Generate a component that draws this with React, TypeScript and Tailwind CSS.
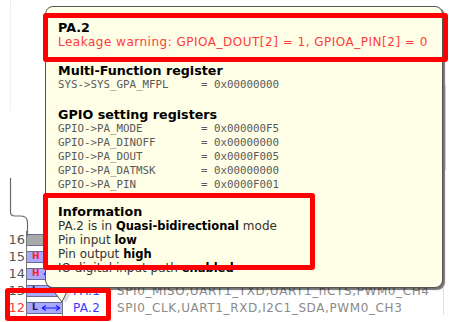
import React from "react";

const monoRows = [
  ["GPIO->PA_MODE", "0x000000F5"],
  ["GPIO->PA_DINOFF", "0x00000000"],
  ["GPIO->PA_DOUT", "0x0000F005"],
  ["GPIO->PA_DATMSK", "0x00000000"],
  ["GPIO->PA_PIN", "0x0000F001"],
];

// rows 14-16 sit under the tooltip, only their left part shows
const pins = [
  { n: "16", fill: "bg-[#a9a9a9]", mark: "", markCls: "", arrow: false, label: "", fn: "" },
  { n: "15", fill: "bg-[#a8a8ff]", mark: "H", markCls: "text-[#ff2020]", arrow: false, label: "", fn: "" },
  { n: "14", fill: "bg-[#a8a8ff]", mark: "H", markCls: "text-[#ff2020]", arrow: true, label: "", fn: "" },
  { n: "13", fill: "bg-[#a8a8ff]", mark: "L", markCls: "text-[#202050]", arrow: false, label: "PA.1", fn: "SPI0_MISO,UART1_TXD,UART1_nCTS,PWM0_CH4" },
  { n: "12", fill: "bg-[#a8a8ff]", mark: "L", markCls: "text-[#202050]", arrow: true, label: "PA.2", fn: "SPI0_CLK,UART1_RXD,I2C1_SDA,PWM0_CH3" },
];

// double-headed arrow used in the pin boxes
const Arrow = () => (
  <svg width="20" height="8" viewBox="0 0 20 8" className="ml-[3px]">
    <path d="M1 4 H19 M1 4 L5 1.5 M1 4 L5 6.5 M19 4 L15 1.5 M19 4 L15 6.5" stroke="#1a1aff" strokeWidth="1.1" fill="none" />
  </svg>
);

const Mono = ({ name, value }: { name: string; value: string }) => (
  <div className="whitespace-pre font-['DejaVu_Sans_Mono',monospace] text-[10.8px] leading-[14px] text-[#5a5a5a]">
    {name.padEnd(22, " ")}= {value}
  </div>
);

const B = ({ children }: { children: React.ReactNode }) => (
  <b className="text-[11.5px] text-black">{children}</b>
);

export default function App() {
  return (
    <div className="relative h-[322px] w-[450px] overflow-hidden bg-white font-['DejaVu_Sans',sans-serif]">
      {/* faint guide lines of the chip view */}
      <div className="absolute left-[10px] top-0 h-[110px] border-l border-dotted border-[#e2e2e2]" />
      <div className="absolute left-[445px] top-[85px] h-[85px] border-l border-[#d8d8d8]" />
      <div className="absolute left-[443px] top-[287px] h-[28px] border-l border-[#e0e0e0]" />

      {/* chip body outline */}
      <svg width="40" height="60" viewBox="0 0 40 60" className="absolute left-0 top-[176px]">
        <path d="M10.5 2 V36 Q10.5 40 15 40 H21 Q27.5 40 27.5 47 V60" stroke="#6a6a6a" strokeWidth="1.2" fill="none" />
      </svg>

      {/* pin rows */}
      <div className="flex flex-col pt-[231px]">
        {pins.map((p) => (
          <div key={p.n} className="flex h-[17px] items-center">
            <span
              className={`w-[26px] pr-[1px] text-right text-[13px] leading-none ${
                p.n === "12" ? "text-[#ff3b3b]" : "text-[#555]"
              }`}
            >
              {p.n}
            </span>
            <div className="flex h-[17px] w-[37px] items-center border-x border-[#777] bg-white">
              <div className={`flex h-[12px] w-full items-center border-y border-[#6a6a9a] pl-[5px] ${p.fill}`}>
                <span className={`text-[9px] font-bold leading-none ${p.markCls}`}>{p.mark}</span>
                {p.arrow && <Arrow />}
              </div>
            </div>
            <span className="ml-[10px] w-[44px] text-[12px] leading-none tracking-[0.3px] text-[#3a3aff]">{p.label}</span>
            <span className="text-[12px] leading-none tracking-[0.6px] text-[#8a8a8a]">{p.fn}</span>
          </div>
        ))}
      </div>

      {/* tooltip tail */}
      <svg width="30" height="22" viewBox="0 0 30 22" className="absolute left-[46px] top-[284px]">
        <path d="M4 1 L26 1 L17 19 Z" fill="#c8c8c8" opacity="0.6" transform="translate(3 0)" />
        <path d="M3 0 L24 0 L16 18 Z" fill="#fffee6" />
        <path d="M3 1 L16 18 L24 1" stroke="#555" strokeWidth="1" fill="none" />
      </svg>

      {/* tooltip */}
      <div className="absolute left-[45px] top-[6px] h-[282px] w-[398px] overflow-hidden rounded-[8px] border border-[#555] bg-[#fffee6] px-[12px] pt-[14px] shadow-[2px_2px_1px_rgba(0,0,0,0.55)]">
        <div className="text-[12.7px] font-bold leading-[14px] text-black">PA.2</div>
        <div className="text-[12px] leading-[14px] tracking-[0.5px] text-[#ff3a3a]">
          Leakage warning: GPIOA_DOUT[2] = 1, GPIOA_PIN[2] = 0
        </div>

        <div className="mt-[15px] text-[12.7px] font-bold leading-[14px] text-black">Multi-Function register</div>
        <Mono name="SYS->SYS_GPA_MFPL" value="0x00000000" />

        <div className="mt-[16px] text-[12.7px] font-bold leading-[14px] text-black">GPIO setting registers</div>
        {monoRows.map(([n, v]) => (
          <Mono key={n} name={n} value={v} />
        ))}

        <div className="mt-[13px] text-[12px] leading-[14px] text-[#333]">
          <div className="text-[12.7px] font-bold text-black">Information</div>
          <div>
            PA.2 is in <B>Quasi-bidirectional</B> mode
          </div>
          <div>
            Pin input <B>low</B>
          </div>
          <div>
            Pin output <B>high</B>
          </div>
          <div>
            IO digital input path <B>enabled</B>
          </div>
        </div>
      </div>

      {/* red annotation boxes */}
      <div className="absolute left-[43px] top-[13px] h-[49px] w-[405px] rounded-[3px] border-[5px] border-[#ff0000]" />
      <div className="absolute left-[43px] top-[193px] h-[77px] w-[272px] rounded-[3px] border-[5px] border-[#ff0000]" />
      <div className="absolute left-[5px] top-[288px] h-[33px] w-[106px] rounded-[3px] border-[5px] border-[#ff0000]" />
    </div>
  );
}
